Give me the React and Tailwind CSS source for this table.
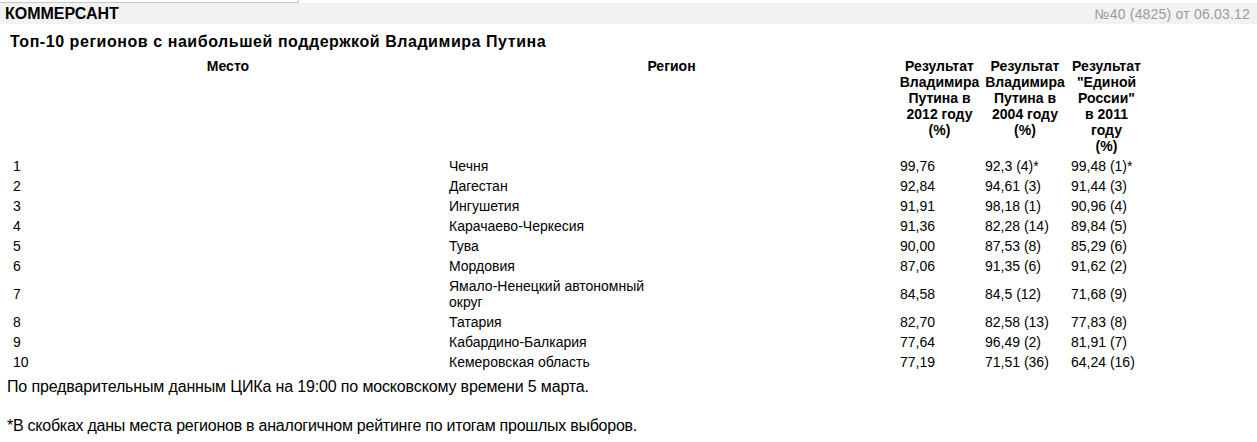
import React from 'react';

const rows = [
  ['1', 'Чечня', '99,76', '92,3 (4)*', '99,48 (1)*'],
  ['2', 'Дагестан', '92,84', '94,61 (3)', '91,44 (3)'],
  ['3', 'Ингушетия', '91,91', '98,18 (1)', '90,96 (4)'],
  ['4', 'Карачаево-Черкесия', '91,36', '82,28 (14)', '89,84 (5)'],
  ['5', 'Тува', '90,00', '87,53 (8)', '85,29 (6)'],
  ['6', 'Мордовия', '87,06', '91,35 (6)', '91,62 (2)'],
  ['7', 'Ямало-Ненецкий автономный округ', '84,58', '84,5 (12)', '71,68 (9)'],
  ['8', 'Татария', '82,70', '82,58 (13)', '77,83 (8)'],
  ['9', 'Кабардино-Балкария', '77,64', '96,49 (2)', '81,91 (7)'],
  ['10', 'Кемеровская область', '77,19', '71,51 (36)', '64,24 (16)'],
];

function App() {
  return (
    <div className="w-[1257px] h-[442px] overflow-hidden bg-white text-black font-['Liberation_Sans',Arial,sans-serif]">
      {/* cropped box edge at the very top */}
      <div className="h-[3px] w-[299px] border-b border-r border-[#c8c8c8]" />

      <div className="flex items-center justify-between h-[21px] bg-[#f2f2f2] pl-[5px] pr-[7px]">
        <span className="text-[16px] font-bold leading-none">КОММЕРСАНТ</span>
        <span className="text-[14px] text-[#9a9a9a] leading-none tracking-[0.2px]">№40 (4825) от 06.03.12</span>
      </div>

      <div className="pl-[10px] pt-[9px]">
        <h1 className="text-[16px] font-bold leading-[18px] mb-[5px] tracking-[0.55px]">
          Топ-10 регионов с наибольшей поддержкой Владимира Путина
        </h1>

        <table className="table-fixed border-collapse text-[14px] leading-[16px]">
          <colgroup>
            <col className="w-[436px]" />
            <col className="w-[451px]" />
            <col className="w-[85px]" />
            <col className="w-[86px]" />
            <col className="w-[77px]" />
          </colgroup>
          <thead>
            <tr className="font-bold align-top text-center">
              <th className="px-[3px] py-[2px]">Место</th>
              <th className="px-[3px] py-[2px]">Регион</th>
              <th className="px-0 py-[2px] whitespace-nowrap">
                Результат<br />Владимира<br />Путина в<br />2012 году<br />(%)
              </th>
              <th className="px-0 py-[2px] whitespace-nowrap">
                Результат<br />Владимира<br />Путина в<br />2004 году<br />(%)
              </th>
              <th className="px-0 py-[2px] whitespace-nowrap">
                Результат<br />"Единой<br />России"<br />в 2011<br />году<br />(%)
              </th>
            </tr>
          </thead>
          <tbody>
            {rows.map((r) => (
              <tr key={r[0]} className="align-middle">
                <td className="px-[3px] py-[2px]">{r[0]}</td>
                <td className="px-[3px] py-[2px]">
                  <div className="w-[205px]">{r[1]}</div>
                </td>
                <td className="px-[3px] py-[2px]">{r[2]}</td>
                <td className="px-[3px] py-[2px]">{r[3]}</td>
                <td className="px-[3px] py-[2px]">{r[4]}</td>
              </tr>
            ))}
          </tbody>
        </table>
      </div>

      <div className="pl-[7px] pt-[5px] text-[16px] leading-[19.5px] tracking-[-0.15px]">
        <p>По предварительным данным ЦИКа на 19:00 по московскому времени 5 марта.</p>
        <p className="mt-[19.5px] tracking-[-0.25px]">*В скобках даны места регионов в аналогичном рейтинге по итогам прошлых выборов.</p>
      </div>
    </div>
  );
}

export default App;
